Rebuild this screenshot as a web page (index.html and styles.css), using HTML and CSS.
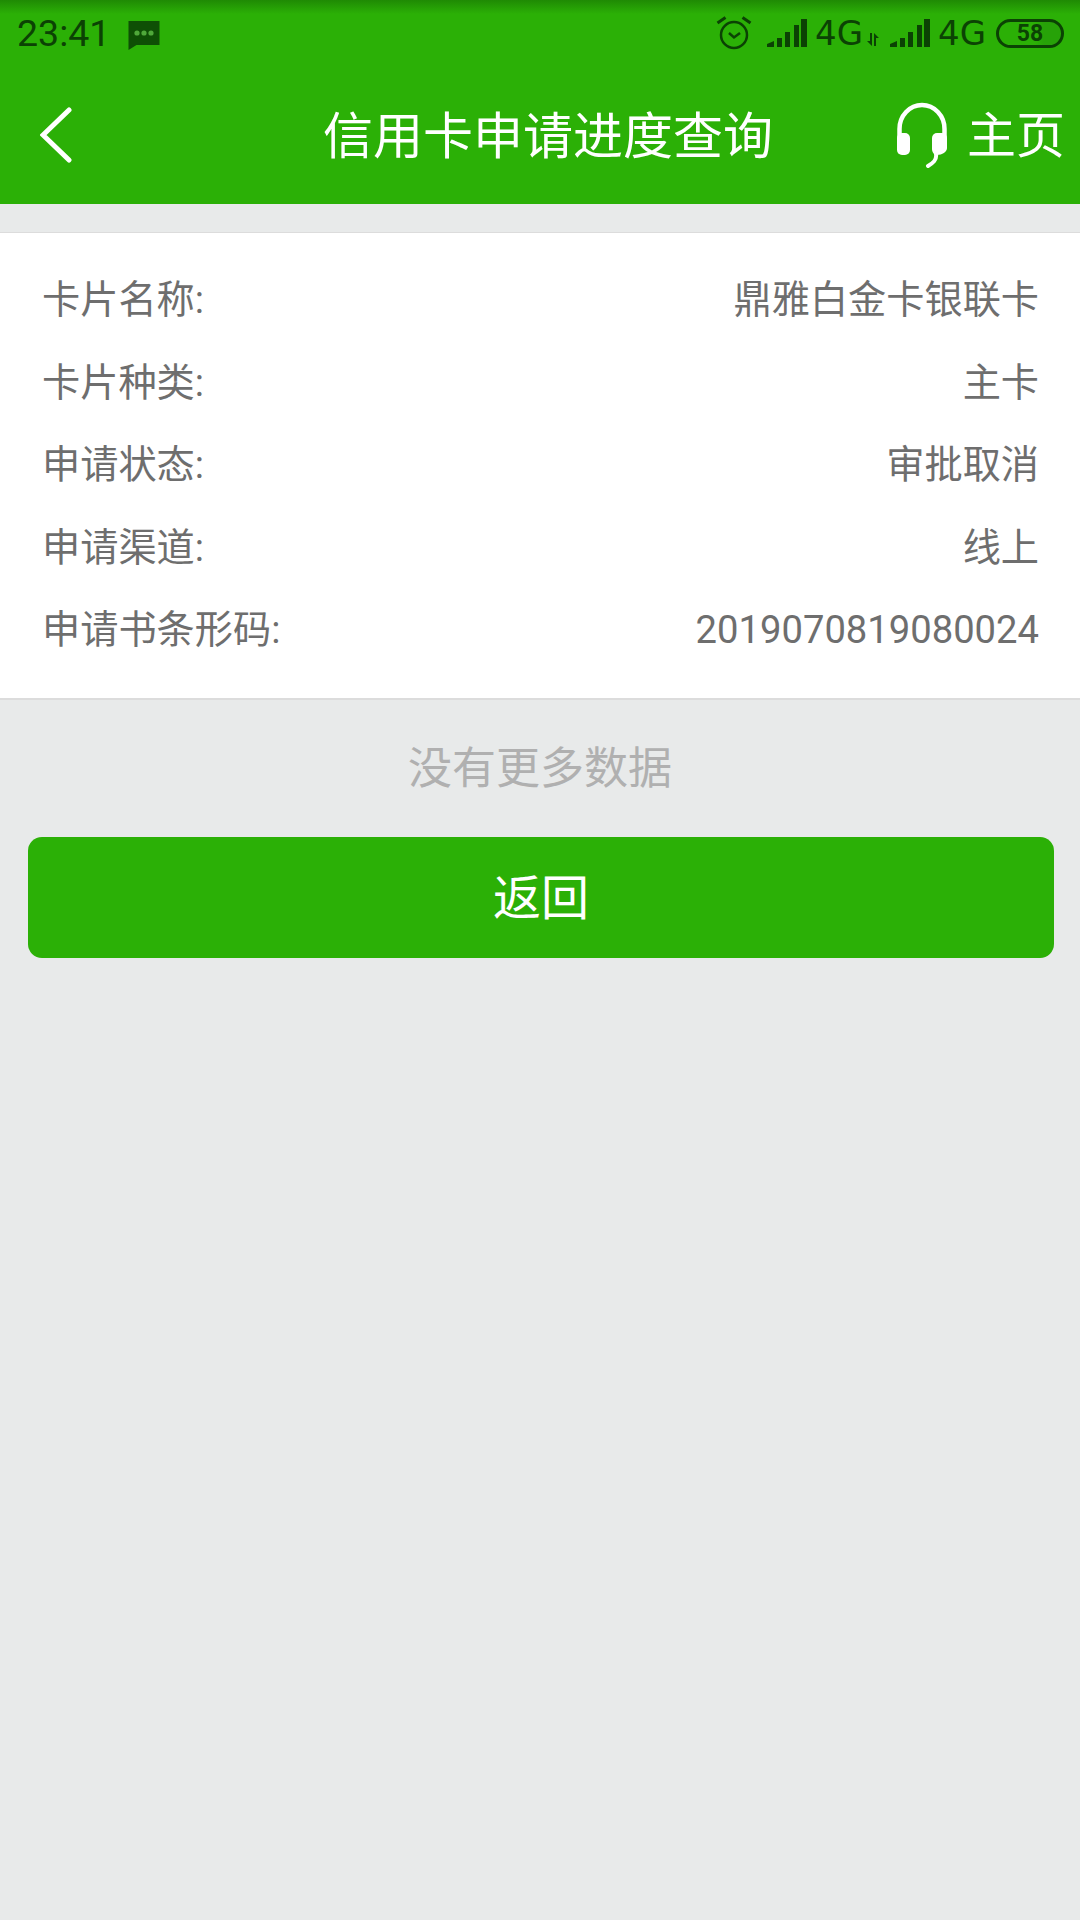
FILE: index.html
```html
<!DOCTYPE html>
<html>
<head>
    <meta charset="utf-8">
    <link rel="stylesheet" href="styles.css">
</head>
<body>
    <div class="header">
        <div class="status-bar">
            <div class="status-left">
                <span class="time">23:41</span>
                <svg class="msg-icon" width="32" height="29" viewBox="0 0 31 29">
                    <path d="M0 0H31V24H8L0 29Z" fill="#0e4f05"/>
                    <circle cx="8.5" cy="12" r="2.6" fill="#4fa83a"/>
                    <circle cx="15.5" cy="12" r="2.6" fill="#4fa83a"/>
                    <circle cx="22.5" cy="12" r="2.6" fill="#4fa83a"/>
                </svg>
            </div>
            <div class="status-right">
                <!-- alarm -->
                <svg class="alarm" width="36" height="36" viewBox="0 0 36 36" fill="none" stroke="#0b4204" stroke-width="2.5">
                    <circle cx="18" cy="20" r="13"/>
                    <path d="M13 18L18 22.5L24 18"/>
                    <path d="M1.5 8L9.5 2.5M34.5 8L26.5 2.5" stroke-width="3"/>
                </svg>
                <svg class="signal" width="40" height="29" viewBox="0 0 40 29" fill="#0b4204">
                    <path d="M0 28V25L7 22V28Z"/>
                    <rect x="10" y="19" width="5" height="9"/>
                    <rect x="18" y="13" width="5" height="15"/>
                    <rect x="27" y="6" width="5" height="22"/>
                    <rect x="34" y="0" width="6" height="28"/>
                </svg>
                <span class="net">4G</span>
                <svg class="arrows" width="12" height="13" viewBox="0 0 12 13" fill="#0b4204">
                    <path d="M3 0H5V13L0 8H3Z"/>
                    <path d="M7 0L12 5H9V13H7Z"/>
                </svg>
                <svg class="signal" width="40" height="29" viewBox="0 0 40 29" fill="#0b4204">
                    <path d="M0 28V25L7 22V28Z"/>
                    <rect x="10" y="19" width="5" height="9"/>
                    <rect x="18" y="13" width="5" height="15"/>
                    <rect x="27" y="6" width="5" height="22"/>
                    <rect x="34" y="0" width="6" height="28"/>
                </svg>
                <span class="net">4G</span>
                <div class="battery">58</div>
            </div>
        </div>
        <div class="nav-bar">
            <svg class="back" width="36" height="60" viewBox="0 0 36 60" fill="none" stroke="#fff" stroke-width="5" stroke-linecap="round">
                <path d="M29 5L3 30L29 55"/>
            </svg>
            <div class="title">信用卡申请进度查询</div>
            <div class="home">
                <svg class="headset" width="52" height="66" viewBox="0 0 52 66">
                    <path d="M3.5 40V27A22.5 24 0 0 1 48.5 27V40" fill="none" stroke="#fff" stroke-width="4.5"/>
                    <rect x="1" y="31" width="13" height="22" rx="5" fill="#fff"/>
                    <path d="M36 36A5 5 0 0 1 41 31H46A5 5 0 0 1 51 36V46C51 50 46 53 41 53C38 53 36 50 36 47Z" fill="#fff"/>
                    <path d="M40 52C41 58 37 61 32 64" fill="none" stroke="#fff" stroke-width="4" stroke-linecap="round"/>
                </svg>
                <span>主页</span>
            </div>
        </div>
    </div>

    <div class="card">
        <div class="row"><span>卡片名称:</span><span>鼎雅白金卡银联卡</span></div>
        <div class="row"><span>卡片种类:</span><span>主卡</span></div>
        <div class="row"><span>申请状态:</span><span>审批取消</span></div>
        <div class="row"><span>申请渠道:</span><span>线上</span></div>
        <div class="row"><span>申请书条形码:</span><span>2019070819080024</span></div>
    </div>

    <div class="no-more">没有更多数据</div>
    <button type="button" class="btn">返回</button>
</body>
</html>
```

FILE: styles.css
```css
body {
    margin: 0;
    height: 1920px;
    overflow: hidden;
    background-color: #e8eaea;
    font-family: Roboto, "Noto Sans CJK SC", sans-serif;
}

.header {
    height: 204px;
    background: linear-gradient(#1f8a04 0, #2bb006 14px);
}

.status-bar {
    height: 66px;
    padding: 0 16px 0 17px;
    display: flex;
    justify-content: space-between;
    align-items: center;
    color: #0b4204;
}

.status-left,
.status-right {
    display: flex;
    align-items: center;
}

.time {
    font-size: 37.5px;
    line-height: 40px;
}

.msg-icon {
    margin-left: 18px;
    margin-top: 4px;
}

.alarm {
    margin-right: 15px;
}

.net {
    font-family: "DejaVu Sans", sans-serif;
    font-size: 34px;
    line-height: 40px;
    margin-left: 8px;
}

.arrows {
    margin: 12px 11px 0 4px;
}

.battery {
    box-sizing: border-box;
    width: 68px;
    height: 29px;
    margin-left: 10px;
    border: 3px solid #0b4204;
    border-radius: 15px;
    font-size: 23px;
    font-weight: bold;
    line-height: 24px;
    text-align: center;
    background: linear-gradient(90deg, transparent 58%, #27a208 72%);
}

.nav-bar {
    height: 138px;
    padding: 0 15px 0 40px;
    display: flex;
    align-items: center;
    color: #fff;
    line-height: 60px;
}

.title {
    flex: 1;
    padding: 3px 0 0 124px;
    text-align: center;
    font-size: 50px;
}

.home {
    display: flex;
    align-items: center;
    font-size: 49px;
}

.home span {
    padding-top: 3px;
}

.headset {
    margin-right: 19px;
}

.card {
    margin-top: 28px;
    padding: 26px 41px 26px 42px;
    background-color: #fff;
    border-top: 1px solid #dcdcdc;
    border-bottom: 2px solid #dcdcdc;
    color: #6e6e6e;
    font-size: 38.2px;
}

.row {
    height: 82.5px;
    line-height: 82.5px;
    display: flex;
    justify-content: space-between;
}

.no-more {
    margin-top: 36px;
    text-align: center;
    font-size: 44px;
    line-height: 66px;
    color: #b0b0b0;
}

.btn {
    display: block;
    width: 1026px;
    height: 121px;
    margin: 35px 0 0 28px;
    padding: 4px 0 0;
    background-color: #2bb006;
    color: #fff;
    border: none;
    border-radius: 14px;
    font-family: inherit;
    font-size: 48px;
    line-height: 60px;
}
```
